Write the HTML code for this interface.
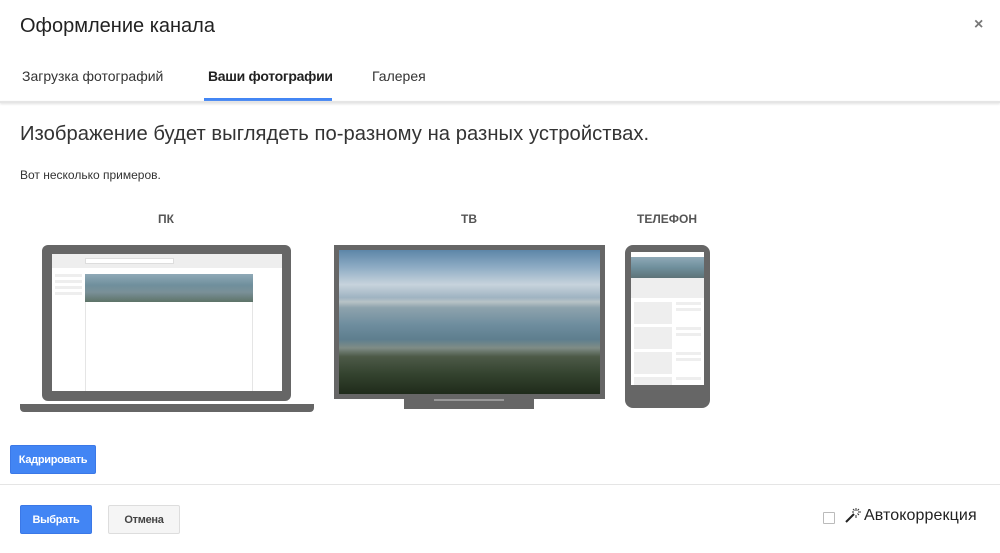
<!DOCTYPE html>
<html><head><meta charset="utf-8"><style>
*{margin:0;padding:0;box-sizing:border-box}
body{width:1000px;height:553px;background:#fff;font-family:"Liberation Sans",Arial,sans-serif;position:relative;overflow:hidden;color:#222}
.a{position:absolute}
.photo{background:linear-gradient(180deg,#5d86a8 0%,#8eacc4 12%,#c7d3dc 24%,#9fb3c2 33%,#b8c3c6 36%,#8ea3ad 40%,#6e8d9e 52%,#5e7e8e 62%,#7f8c86 68%,#4d5a48 74%,#34432f 86%,#1f2b1b 100%)}
.g{background:#666}
.btn{position:absolute;border-radius:2px;font-size:11px;font-weight:bold;display:flex;align-items:center;justify-content:center;letter-spacing:-0.3px}
.blue{background:#4285f4;color:#fff;border:1px solid #3b78e7}
</style></head><body>
<div class="a" style="left:20px;top:15px;font-size:20px;color:#222">Оформление канала</div>
<div class="a" style="left:974px;top:16px;font-size:16px;color:#777;font-weight:bold">×</div>
<div class="a" style="left:22px;top:68px;font-size:14px;color:#333">Загрузка фотографий</div>
<div class="a" style="left:208px;top:68px;font-size:14px;font-weight:bold;color:#222;letter-spacing:-0.3px">Ваши фотографии</div>
<div class="a" style="left:204px;top:98px;width:128px;height:3px;background:#4285f4"></div>
<div class="a" style="left:372px;top:68px;font-size:14px;color:#333">Галерея</div>
<div class="a" style="left:0;top:101px;width:1000px;height:2px;background:#e5e5e5;box-shadow:0 1px 2px #ddd"></div>
<div class="a" style="left:20px;top:123px;font-size:20.2px;color:#333;letter-spacing:0.05px">Изображение будет выглядеть по-разному на разных устройствах.</div>
<div class="a" style="left:20px;top:168px;font-size:12px;color:#333">Вот несколько примеров.</div>
<div class="a" style="left:158px;top:212px;font-size:12px;font-weight:bold;color:#555">ПК</div>
<div class="a" style="left:461px;top:212px;font-size:12px;font-weight:bold;color:#555">ТВ</div>
<div class="a" style="left:637px;top:212px;font-size:12px;font-weight:bold;color:#555">ТЕЛЕФОН</div>
<!-- laptop -->
<div class="a g" style="left:42px;top:245px;width:249px;height:156px;border-radius:6px"></div>
<div class="a" style="left:52px;top:254px;width:230px;height:137px;background:#fff"></div>
<div class="a" style="left:52px;top:254px;width:230px;height:14px;background:#eee"></div>
<div class="a" style="left:85px;top:258px;width:89px;height:6px;background:#fff;border:1px solid #ddd"></div>
<div class="a" style="left:85px;top:274px;width:168px;height:117px;border-left:1px solid #e5e5e5;border-right:1px solid #e5e5e5"></div>
<div class="a" style="left:85px;top:274px;width:168px;height:28px;background:linear-gradient(180deg,#8fa9b7,#6f8f9c 40%,#7a9098 65%,#5d7368)"></div>
<div class="a" style="left:55px;top:274px;width:27px;height:3px;background:#eee"></div>
<div class="a" style="left:55px;top:280px;width:27px;height:3px;background:#eee"></div>
<div class="a" style="left:55px;top:286px;width:27px;height:3px;background:#eee"></div>
<div class="a" style="left:55px;top:292px;width:27px;height:3px;background:#eee"></div>
<div class="a g" style="left:20px;top:404px;width:294px;height:8px;border-radius:0 0 4px 4px"></div>
<!-- tv -->
<div class="a g" style="left:334px;top:245px;width:271px;height:154px"></div>
<div class="a photo" style="left:339px;top:250px;width:261px;height:144px"></div>
<div class="a g" style="left:404px;top:399px;width:130px;height:10px"></div>
<div class="a" style="left:434px;top:399px;width:70px;height:2px;background:#999"></div>
<!-- phone -->
<div class="a g" style="left:625px;top:245px;width:85px;height:163px;border-radius:8px"></div>
<div class="a" style="left:631px;top:252px;width:73px;height:133px;background:#fff"></div>
<div class="a" style="left:631px;top:257px;width:73px;height:21px;background:linear-gradient(180deg,#8fa9b7,#6f8f9c 50%,#5d7378)"></div>
<div class="a" style="left:631px;top:278px;width:73px;height:20px;background:#eee"></div>
<div class="a" style="left:634px;top:302px;width:38px;height:22px;background:#eee"></div>
<div class="a" style="left:676px;top:302px;width:25px;height:3px;background:#eee"></div>
<div class="a" style="left:676px;top:308px;width:25px;height:3px;background:#eee"></div>
<div class="a" style="left:634px;top:327px;width:38px;height:22px;background:#eee"></div>
<div class="a" style="left:676px;top:327px;width:25px;height:3px;background:#eee"></div>
<div class="a" style="left:676px;top:333px;width:25px;height:3px;background:#eee"></div>
<div class="a" style="left:634px;top:352px;width:38px;height:22px;background:#eee"></div>
<div class="a" style="left:676px;top:352px;width:25px;height:3px;background:#eee"></div>
<div class="a" style="left:676px;top:358px;width:25px;height:3px;background:#eee"></div>
<div class="a" style="left:634px;top:377px;width:38px;height:8px;background:#eee"></div>
<div class="a" style="left:676px;top:377px;width:25px;height:3px;background:#eee"></div>
<div class="btn blue" style="left:10px;top:445px;width:86px;height:29px">Кадрировать</div>
<div class="a" style="left:0;top:484px;width:1000px;height:1px;background:#e5e5e5"></div>
<div class="btn blue" style="left:20px;top:505px;width:72px;height:29px">Выбрать</div>
<div class="btn" style="left:108px;top:505px;width:72px;height:29px;background:#f5f5f5;border:1px solid #ddd;color:#444">Отмена</div>
<div class="a" style="left:823px;top:512px;width:12px;height:12px;border:1px solid #bbb;border-radius:1px"></div>
<svg class="a" style="left:845px;top:507px" width="16" height="16" viewBox="0 0 16 16"><path d="M1 15 L9 7" stroke="#222" stroke-width="2"/><path d="M11 1v3M11 8v3M7 5h2M13 5h3M8 2l1.5 1.5M14 2l-1.5 1.5M14 8l-1.5-1.5" stroke="#333" stroke-width="1"/></svg>
<div class="a" style="left:864px;top:507px;font-size:16px;color:#222;letter-spacing:0.1px">Автокоррекция</div>
</body></html>
